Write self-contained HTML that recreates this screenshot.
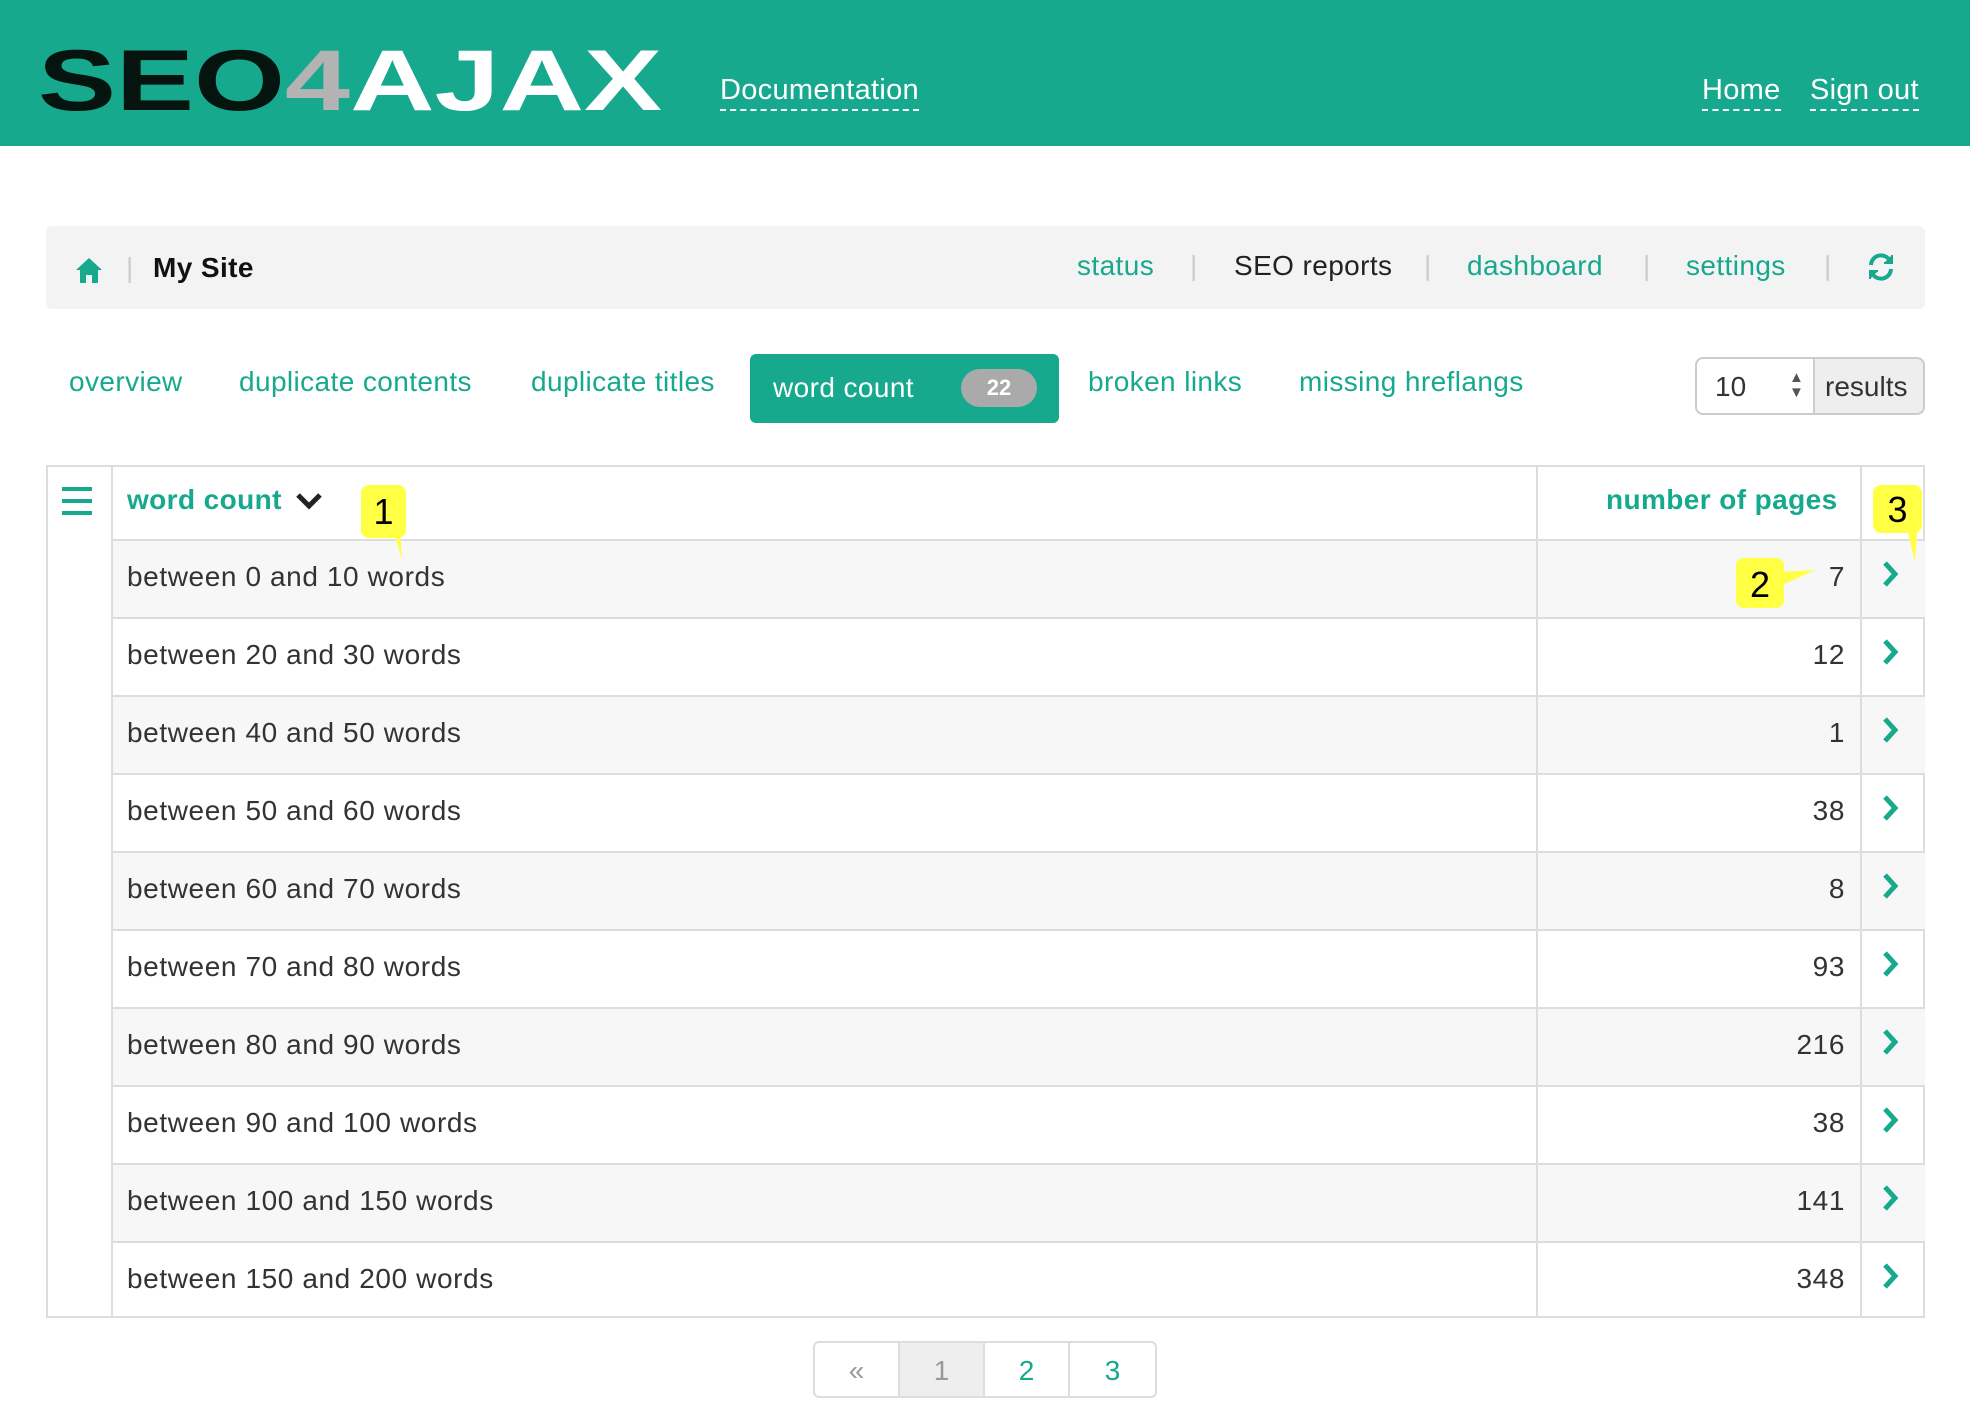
<!DOCTYPE html><html><head><meta charset="utf-8"><style>
*{box-sizing:border-box;margin:0;padding:0}
body{width:1970px;height:1424px;background:#fff;font-family:"Liberation Sans",sans-serif;color:#333;position:relative;overflow:hidden}
.a{position:absolute}
.g{color:#17a98d}
.hd{left:0;top:0;width:1970px;height:146px;background:#17a98d}
.hl{color:#fff;font-size:29px;border-bottom:2px dashed #fff;padding-bottom:2px;letter-spacing:0.3px}
.bar{left:46px;top:226px;width:1879px;height:83px;background:#f3f3f3;border-radius:6px}
.t{font-size:28px;letter-spacing:0.4px}
.row{position:absolute;left:111px;width:1814px;height:78px;border-top:2px solid #ddd}
.row span{position:absolute;top:20px;font-size:28px;letter-spacing:0.6px}
.yl{background:#ffff44;border-radius:8px;font-size:36px;color:#000;text-align:center;position:absolute}
</style></head><body>
<div class="a hd"></div>
<div class="a" style="left:38px;top:38px;font:900 86px 'Liberation Sans',sans-serif;line-height:86px;transform:scaleX(1.36);transform-origin:left;white-space:nowrap"><span style="color:#06140f">SEO</span><span style="color:#b3b3b3">4</span><span style="color:#fff">AJAX</span></div>
<div class="a hl" style="left:720px;top:74px">Documentation</div>
<div class="a hl" style="left:1702px;top:74px">Home</div>
<div class="a hl" style="left:1810px;top:74px">Sign out</div>
<div class="a bar"></div>
<svg class="a" style="left:75px;top:256px" width="28" height="28" viewBox="0 0 28 28"><path d="M14 2 L27 14 H23 V27 H17 V19 H11 V27 H5 V14 H1Z" fill="#17a98d"/></svg>
<div class="a" style="left:126px;top:252px;color:#ccc;font-size:28px">|</div>
<div class="a t" style="left:153px;top:252px;font-weight:bold;color:#111">My Site</div>
<div class="a t g" style="left:1077px;top:250px">status</div>
<div class="a t" style="left:1234px;top:250px;color:#222">SEO reports</div>
<div class="a t g" style="left:1467px;top:250px">dashboard</div>
<div class="a t g" style="left:1686px;top:250px">settings</div>
<div class="a" style="left:1190px;top:250px;color:#ccc;font-size:28px">|</div>
<div class="a" style="left:1424px;top:250px;color:#ccc;font-size:28px">|</div>
<div class="a" style="left:1643px;top:250px;color:#ccc;font-size:28px">|</div>
<div class="a" style="left:1824px;top:250px;color:#ccc;font-size:28px">|</div>
<svg class="a" style="left:1866px;top:252px" width="30" height="30" viewBox="0 0 30 30" fill="none" stroke="#17a98d" stroke-width="4"><path d="M5 13 A10 10 0 0 1 24 9"/><path d="M25 17 A10 10 0 0 1 6 21"/><path d="M26 3 V11 H18" fill="#17a98d" stroke-width="2"/><path d="M4 27 V19 H12" fill="#17a98d" stroke-width="2"/></svg>
<div class="a t g" style="left:69px;top:366px">overview</div>
<div class="a t g" style="left:239px;top:366px">duplicate contents</div>
<div class="a t g" style="left:531px;top:366px">duplicate titles</div>
<div class="a" style="left:750px;top:354px;width:309px;height:69px;background:#17a98d;border-radius:6px"></div>
<div class="a t" style="left:773px;top:372px;color:#fff">word count</div>
<div class="a" style="left:961px;top:369px;width:76px;height:38px;background:#aaa;border-radius:19px;color:#fff;font-weight:bold;font-size:22px;text-align:center;line-height:38px">22</div>
<div class="a t g" style="left:1088px;top:366px">broken links</div>
<div class="a t g" style="left:1299px;top:366px">missing hreflangs</div>
<div class="a" style="left:1695px;top:357px;width:120px;height:58px;border:2px solid #ccc;border-radius:8px 0 0 8px;background:#fff;font-size:28px;padding:12px 0 0 18px">10</div>
<div class="a" style="left:1789px;top:370px;font-size:15px;color:#555;line-height:15px">▲<br>▼</div>
<div class="a" style="left:1813px;top:357px;width:112px;height:58px;border:2px solid #ccc;border-radius:0 8px 8px 0;background:#eee;font-size:28px;padding:12px 0 0 10px">results</div>
<div class="a" style="left:46px;top:465px;width:1879px;height:853px;border:2px solid #ddd"></div>
<div class="row" style="top:539px;background:#f7f7f7"><span style="left:16px">between 0 and 10 words</span><span style="right:80px">7</span></div>
<div class="row" style="top:617px"><span style="left:16px">between 20 and 30 words</span><span style="right:80px">12</span></div>
<div class="row" style="top:695px;background:#f7f7f7"><span style="left:16px">between 40 and 50 words</span><span style="right:80px">1</span></div>
<div class="row" style="top:773px"><span style="left:16px">between 50 and 60 words</span><span style="right:80px">38</span></div>
<div class="row" style="top:851px;background:#f7f7f7"><span style="left:16px">between 60 and 70 words</span><span style="right:80px">8</span></div>
<div class="row" style="top:929px"><span style="left:16px">between 70 and 80 words</span><span style="right:80px">93</span></div>
<div class="row" style="top:1007px;background:#f7f7f7"><span style="left:16px">between 80 and 90 words</span><span style="right:80px">216</span></div>
<div class="row" style="top:1085px"><span style="left:16px">between 90 and 100 words</span><span style="right:80px">38</span></div>
<div class="row" style="top:1163px;background:#f7f7f7"><span style="left:16px">between 100 and 150 words</span><span style="right:80px">141</span></div>
<div class="row" style="top:1241px;height:77px"><span style="left:16px">between 150 and 200 words</span><span style="right:80px">348</span></div>
<div class="a" style="left:111px;top:465px;width:2px;height:853px;background:#ddd"></div>
<div class="a" style="left:1536px;top:465px;width:2px;height:853px;background:#ddd"></div>
<div class="a" style="left:1860px;top:465px;width:2px;height:853px;background:#ddd"></div>
<div class="a" style="left:62px;top:487px;width:30px;height:28px;border-top:4px solid #17a98d;border-bottom:4px solid #17a98d"><div style="margin-top:8px;height:4px;background:#17a98d"></div></div>
<div class="a g" style="left:127px;top:484px;font-size:28px;font-weight:bold;letter-spacing:0.4px">word count</div>
<svg class="a" style="left:295px;top:492px" width="28" height="18"><path d="M3 3 L14 14 L25 3" fill="none" stroke="#222" stroke-width="5"/></svg>
<div class="a g" style="left:1606px;top:484px;font-size:28px;font-weight:bold;letter-spacing:0.4px">number of pages</div>
<svg class="a" style="left:1880px;top:560px" width="20" height="760"><g fill="none" stroke="#17a98d" stroke-width="5"><path d="M5 3 l10 11 -10 11"/><path d="M5 81 l10 11 -10 11"/><path d="M5 159 l10 11 -10 11"/><path d="M5 237 l10 11 -10 11"/><path d="M5 315 l10 11 -10 11"/><path d="M5 393 l10 11 -10 11"/><path d="M5 471 l10 11 -10 11"/><path d="M5 549 l10 11 -10 11"/><path d="M5 627 l10 11 -10 11"/><path d="M5 705 l10 11 -10 11"/></g></svg>
<div class="a" style="left:813px;top:1341px;width:344px;height:57px;border:2px solid #ddd;border-radius:6px;display:flex;font-size:28px">
<div style="width:86px;text-align:center;padding-top:12px;color:#999;border-right:2px solid #ddd">«</div>
<div style="width:86px;text-align:center;padding-top:12px;color:#999;background:#eee;border-right:2px solid #ddd">1</div>
<div style="width:86px;text-align:center;padding-top:12px;color:#17a98d;border-right:2px solid #ddd">2</div>
<div style="width:86px;text-align:center;padding-top:12px;color:#17a98d">3</div></div>
<svg class="a" style="left:0;top:0" width="1970" height="1424"><g fill="#ffff44"><path d="M385 500 L402 560 L398 500Z"/><path d="M1780 572 L1815 570 L1780 586Z"/><path d="M1905 520 L1915 562 L1918 520Z"/></g></svg>
<div class="yl" style="left:361px;top:485px;width:45px;height:53px;line-height:53px">1</div>
<div class="yl" style="left:1736px;top:558px;width:48px;height:50px;line-height:54px">2</div>
<div class="yl" style="left:1873px;top:485px;width:49px;height:48px;line-height:50px">3</div>
</body></html>
